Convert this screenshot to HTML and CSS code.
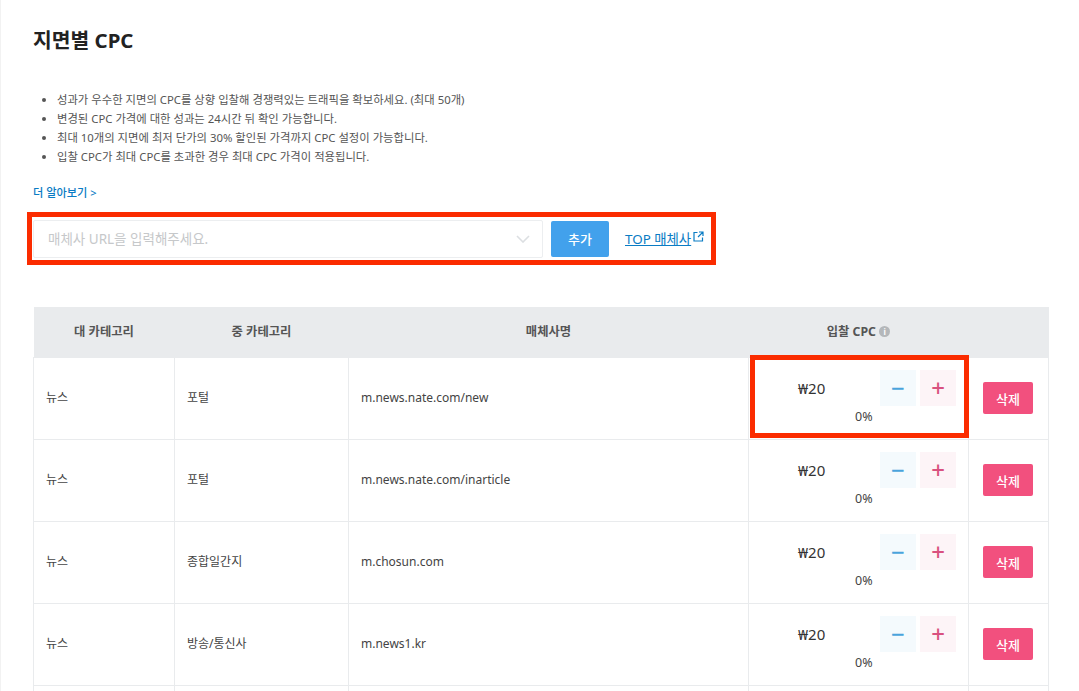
FILE: index.html
```html
<!DOCTYPE html>
<html lang="ko">
<head>
  <meta charset="UTF-8">
  <title>지면별 CPC</title>
  <link rel="stylesheet" href="styles.css">
</head>
<body>

<div class="page">
  <h2 class="title">지면별 CPC</h2>

  <ul class="notes">
    <li>성과가 우수한 지면의 CPC를 상향 입찰해 경쟁력있는 트래픽을 확보하세요. (최대 50개)</li>
    <li>변경된 CPC 가격에 대한 성과는 24시간 뒤 확인 가능합니다.</li>
    <li>최대 10개의 지면에 최저 단가의 30% 할인된 가격까지 CPC 설정이 가능합니다.</li>
    <li>입찰 CPC가 최대 CPC를 초과한 경우 최대 CPC 가격이 적용됩니다.</li>
  </ul>

  <a class="more-link" href="#">더 알아보기 &gt;</a>

  <div class="add-row">
    <div class="url-select">
      <span class="placeholder">매체사 URL을 입력해주세요.</span>
      <svg class="chevron" width="14" height="8" viewBox="0 0 14 8"><path d="M1 1l6 6 6-6" fill="none" stroke="#dcdfe2" stroke-width="1.6"/></svg>
    </div>
    <button class="add-btn">추가</button>
    <a class="top-link" href="#">TOP 매체사</a>
    <svg class="ext-icon" width="11" height="11" viewBox="0 0 11 11"><path d="M4.5 1.5H1v8.5h8.5V6.5M6 1h4v4M10 1L5 6" fill="none" stroke="#0a7cc4" stroke-width="1.2"/></svg>
    <div class="highlight highlight-add"></div>
  </div>

  <table class="cpc-table">
    <thead>
      <tr>
        <th class="col-cat">대 카테고리</th>
        <th class="col-sub">중 카테고리</th>
        <th class="col-name">매체사명</th>
        <th class="col-bid">입찰 CPC <span class="info">i</span></th>
        <th class="col-del"></th>
      </tr>
    </thead>
    <tbody>
      <tr>
        <td>뉴스</td>
        <td>포털</td>
        <td>m.news.nate.com/new</td>
        <td class="bid-cell">
          <div class="bid-top">
            <span class="amount">₩20</span>
            <button class="step minus">−</button>
            <button class="step plus">+</button>
          </div>
          <div class="rate">0%</div>
          <div class="highlight highlight-bid"></div>
        </td>
        <td class="del-cell"><button class="del-btn">삭제</button></td>
      </tr>
      <tr>
        <td>뉴스</td>
        <td>포털</td>
        <td>m.news.nate.com/inarticle</td>
        <td class="bid-cell">
          <div class="bid-top">
            <span class="amount">₩20</span>
            <button class="step minus">−</button>
            <button class="step plus">+</button>
          </div>
          <div class="rate">0%</div>
        </td>
        <td class="del-cell"><button class="del-btn">삭제</button></td>
      </tr>
      <tr>
        <td>뉴스</td>
        <td>종합일간지</td>
        <td>m.chosun.com</td>
        <td class="bid-cell">
          <div class="bid-top">
            <span class="amount">₩20</span>
            <button class="step minus">−</button>
            <button class="step plus">+</button>
          </div>
          <div class="rate">0%</div>
        </td>
        <td class="del-cell"><button class="del-btn">삭제</button></td>
      </tr>
      <tr>
        <td>뉴스</td>
        <td>방송/통신사</td>
        <td>m.news1.kr</td>
        <td class="bid-cell">
          <div class="bid-top">
            <span class="amount">₩20</span>
            <button class="step minus">−</button>
            <button class="step plus">+</button>
          </div>
          <div class="rate">0%</div>
        </td>
        <td class="del-cell"><button class="del-btn">삭제</button></td>
      </tr>
      <tr>
        <td></td>
        <td></td>
        <td></td>
        <td></td>
        <td></td>
      </tr>
    </tbody>
  </table>
</div>

</body>
</html>
```

FILE: styles.css
```css
html, body {
  margin: 0;
  height: 100%;
  overflow: hidden;
}

body {
  font-family: "Noto Sans", "Noto Sans CJK KR", sans-serif;
  color: #333;
  background: #fff;
}

.page {
  height: 100%;
  padding: 0 29px 0 32px;
  border-left: 1px solid #f2f2f2;
  box-sizing: border-box;
}

.title {
  margin: 0;
  padding-top: 25px;
  font-size: 20.4px;
  line-height: 30px;
  font-weight: 700;
  color: #222;
}

.notes {
  margin: 0;
  padding: 35px 0 0 24px;
  font-size: 11.35px;
  line-height: 19px;
  color: #555;
}

.more-link {
  display: block;
  margin-top: 17px;
  font-size: 11.2px;
  line-height: 19px;
  font-weight: 500;
  color: #0a7cc4;
  text-decoration: none;
}

.add-row {
  position: relative;
  display: flex;
  align-items: center;
  margin-top: 18px;
  height: 38px;
}

.url-select {
  display: flex;
  align-items: center;
  justify-content: space-between;
  width: 510px;
  height: 38px;
  padding: 0 12px 0 14px;
  border: 1px solid #eceef0;
  border-radius: 2px;
  box-sizing: border-box;
}

.placeholder {
  padding-bottom: 2px;
  font-size: 13.5px;
  color: #c6c8ca;
}

.add-btn {
  width: 58px;
  height: 36px;
  margin-left: 8px;
  padding: 0 0 2px;
  border: none;
  border-radius: 2px;
  background: #42a1ec;
  color: #fff;
  font-family: inherit;
  font-size: 13px;
  font-weight: 500;
}

.top-link {
  margin: 0 0 2px 16px;
  font-size: 13.4px;
  color: #0a7cc4;
  text-decoration: underline;
}

.ext-icon {
  margin: 0 0 5px 2px;
}

.highlight {
  position: absolute;
  border: 5px solid #fb2c00;
  box-sizing: border-box;
  pointer-events: none;
}

.highlight-add {
  left: -6px;
  top: -8px;
  width: 689px;
  height: 53px;
}

.highlight-bid {
  left: 1px;
  top: -3px;
  width: 219px;
  height: 83px;
}

.cpc-table {
  width: 1015px;
  margin-top: 49px;
  border-collapse: collapse;
  table-layout: fixed;
  font-size: 12px;
  color: #444;
}

.col-cat { width: 141px; }
.col-sub { width: 174px; }
.col-name { width: 400px; }
.col-bid { width: 220px; }
.col-del { width: 80px; }

.cpc-table th {
  height: 50px;
  padding: 0 0 1px;
  background: #e9ebed;
  box-sizing: border-box;
  font-size: 12.3px;
  font-weight: 700;
  color: #555;
}

.cpc-table td {
  height: 82px;
  padding: 0 12px 2px;
  border: 1px solid #e9ebed;
  box-sizing: border-box;
}

.info {
  display: inline-block;
  width: 11px;
  height: 11px;
  border-radius: 50%;
  background: #b4b7ba;
  color: #fff;
  font-size: 8px;
  line-height: 11px;
  text-align: center;
  vertical-align: 1px;
}

.cpc-table td.bid-cell {
  position: relative;
  padding: 0 7px 0 0;
  vertical-align: top;
}

.bid-top {
  display: flex;
  align-items: center;
  margin-top: 12px;
}

.amount {
  width: 82px;
  margin-left: 49px;
  font-size: 15px;
  color: #333;
}

.step {
  width: 36px;
  height: 36px;
  padding: 0;
  border: none;
  font-family: inherit;
  font-size: 24px;
  font-weight: 500;
  line-height: 34px;
}

.minus {
  background: #f4fafd;
  color: #4aa3dc;
}

.plus {
  margin-left: 4px;
  background: #fdf4f7;
  color: #d9517f;
}

.rate {
  margin-top: 2px;
  padding-left: 106px;
  font-size: 12.5px;
  line-height: 18px;
  color: #444;
}

.cpc-table td.del-cell {
  padding: 0 0 0 14px;
}

.del-btn {
  display: block;
  width: 50px;
  height: 32px;
  padding: 0;
  border: none;
  border-radius: 2px;
  background: #f2507e;
  color: #fff;
  font-family: inherit;
  font-size: 13px;
  font-weight: 500;
}
```
